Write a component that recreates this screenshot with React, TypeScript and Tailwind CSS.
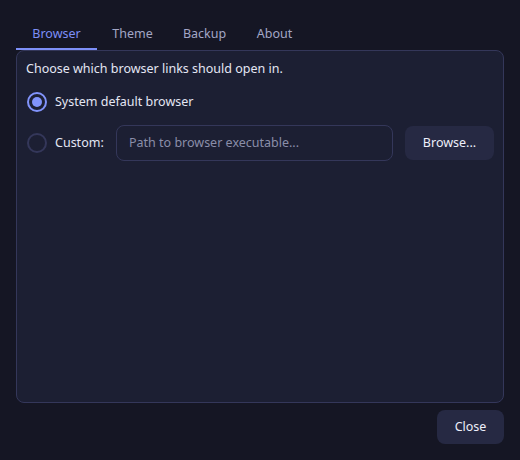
import React, { useState } from "react";

export default function App() {
  const [tab] = useState("Browser");
  const tabs: [string, string][] = [
    ["Browser", "w-[81px]"],
    ["Theme", "w-[71px]"],
    ["Backup", "w-[73px]"],
    ["About", "w-[67px]"],
  ];
  return (
    <div
      className="w-[520px] h-[460px] bg-[#151624] flex flex-col px-4 pt-4 pb-4 text-[12.5px] text-[#e4e6f4]"
      style={{ fontFamily: '"Noto Sans", "Open Sans", sans-serif' }}
    >
      <div className="flex h-[34px] shrink-0">
        {tabs.map(([t, w]) => (
          <div
            key={t}
            className={
              t === tab
                ? `${w} flex items-center justify-center text-[#7d8ff7] border-b-2 border-[#7d8ff7] pt-[4px]`
                : `${w} flex items-center justify-center text-[#a3a7c6] pt-[4px] border-b-2 border-transparent`
            }
          >
            {t}
          </div>
        ))}
      </div>
      <div className="flex-1 bg-[#1c1f33] border border-[#34375a] rounded-lg px-[9px] pt-[8px] flex flex-col">
        <div className="leading-[20px]">Choose which browser links should open in.</div>
        <div className="flex items-center h-[22px] mt-[12px]">
          <div className="w-5 h-5 rounded-full border-2 border-[#8193fb] flex items-center justify-center ml-px">
            <div className="w-[10px] h-[10px] rounded-full bg-[#8193fb]" />
          </div>
          <span className="ml-2">System default browser</span>
        </div>
        <div className="flex items-center h-9 mt-[12px]">
          <div className="w-5 h-5 rounded-full border-2 border-[#34375a] ml-px" />
          <span className="ml-2 w-[61px]">Custom:</span>
          <div className="w-[277px] h-9 rounded-lg border border-[#34375a] flex items-center px-[12px] text-[#8a8ea9]">
            Path to browser executable...
          </div>
          <div className="ml-[12px] w-[89px] h-[34px] rounded-lg bg-[#262943] flex items-center justify-center text-[#eef0fb]">
            Browse...
          </div>
        </div>
      </div>
      <div className="flex justify-end mt-[7px]">
        <div className="w-[67px] h-[34px] rounded-lg bg-[#262943] flex items-center justify-center text-[#eef0fb] pt-px">
          Close
        </div>
      </div>
    </div>
  );
}
